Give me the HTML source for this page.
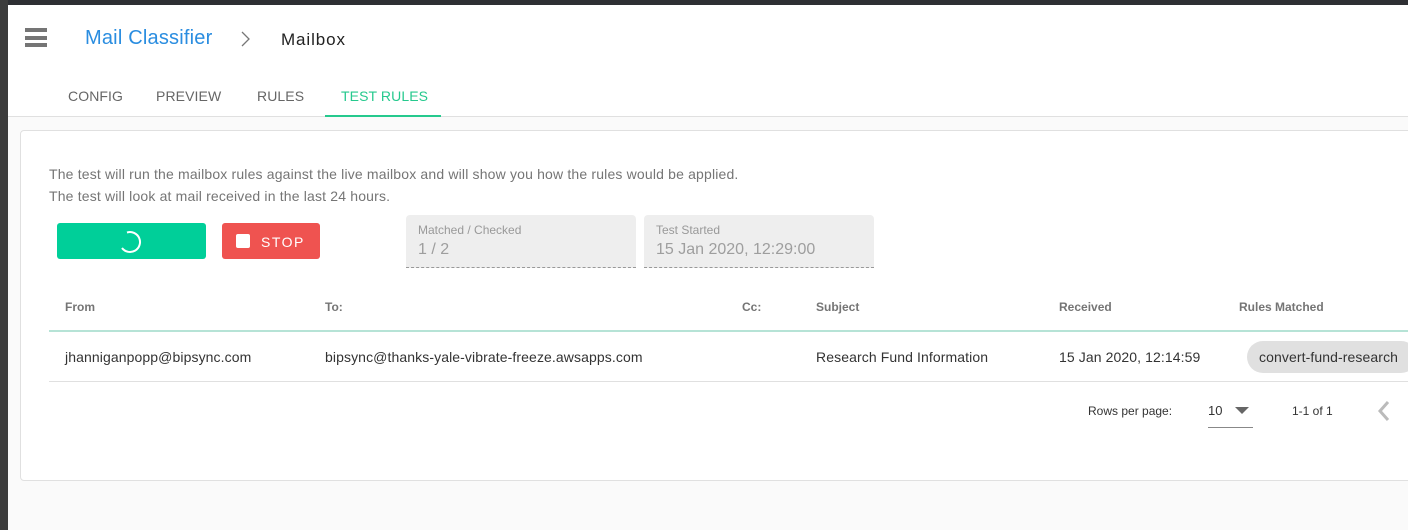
<!DOCTYPE html>
<html><head><style>
*{margin:0;padding:0;box-sizing:border-box}
body{width:1408px;height:530px;overflow:hidden;background:#fafafa;font-family:"Liberation Sans",Arial,sans-serif;position:relative}
.abs{position:absolute}
.top{left:0;top:0;width:1408px;height:5px;background:#2e2f33}
.left{left:0;top:0;width:8px;height:530px;background:#3c3c3c}
.hdr{left:8px;top:5px;width:1400px;height:112px;background:#fff;border-bottom:1px solid #e0e0e0}
.ham div{position:absolute;left:0;width:22px;height:4px;background:#757575}
.tab{top:88px;font-size:14px;color:#666;letter-spacing:0.1px}
.card{left:20px;top:130px;width:1400px;height:351px;background:#fff;border:1px solid #e0e0e0;border-radius:4px}
.txt{font-size:14px;color:#757575;letter-spacing:0.17px}
.th{top:300px;font-size:12px;font-weight:bold;color:#757575}
.td{top:349px;font-size:14px;color:#333;letter-spacing:0.1px}
.box{background:#eeeeee;border-bottom:1px dashed #999;border-radius:4px 4px 0 0}
.lbl{font-size:12px;color:#999;position:absolute;left:12px;top:8px}
.val{font-size:16px;color:#9e9e9e;position:absolute;left:12px;top:26px}
</style></head><body>
<div class="abs hdr"></div>
<div class="abs top"></div>
<div class="abs left"></div>
<div class="abs ham" style="left:25px;top:28px"><div style="top:0"></div><div style="top:8px"></div><div style="top:15px"></div></div>
<div class="abs" style="left:85px;top:27px;font-size:20px;color:#2a8de0;letter-spacing:0.2px">Mail Classifier</div>
<svg class="abs" style="left:240px;top:30px" width="12" height="18"><path d="M2 2 L9 9 L2 16" fill="none" stroke="#777" stroke-width="1.3"/></svg>
<div class="abs" style="left:281px;top:30px;font-size:17px;color:#222;letter-spacing:0.9px">Mailbox</div>
<div class="abs tab" style="left:68px">CONFIG</div>
<div class="abs tab" style="left:156px">PREVIEW</div>
<div class="abs tab" style="left:257px">RULES</div>
<div class="abs tab" style="left:341px;color:#26c98e">TEST RULES</div>
<div class="abs" style="left:325px;top:115px;width:116px;height:2px;background:#26c98e"></div>
<div class="abs card"></div>
<div class="abs txt" style="left:49px;top:166px">The test will run the mailbox rules against the live mailbox and will show you how the rules would be applied.</div>
<div class="abs txt" style="left:49px;top:188px">The test will look at mail received in the last 24 hours.</div>
<div class="abs" style="left:57px;top:223px;width:149px;height:36px;background:#00cf99;border-radius:3px">
<svg width="149" height="36"><path d="M70 9.5 A10 10 0 1 1 65 25" fill="none" stroke="#fff" stroke-width="2"/></svg></div>
<div class="abs" style="left:222px;top:223px;width:98px;height:36px;background:#ef5350;border-radius:3px">
<div class="abs" style="left:14px;top:11px;width:14px;height:14px;background:#fff;border-radius:2px"></div>
<div class="abs" style="left:39px;top:11px;font-size:14px;color:#fff;letter-spacing:1.5px">STOP</div></div>
<div class="abs box" style="left:406px;top:215px;width:230px;height:53px"><span class="lbl">Matched / Checked</span><span class="val">1 / 2</span></div>
<div class="abs box" style="left:644px;top:215px;width:230px;height:53px"><span class="lbl">Test Started</span><span class="val">15 Jan 2020, 12:29:00</span></div>
<div class="abs th" style="left:65px">From</div>
<div class="abs th" style="left:325px">To:</div>
<div class="abs th" style="left:742px">Cc:</div>
<div class="abs th" style="left:816px">Subject</div>
<div class="abs th" style="left:1059px">Received</div>
<div class="abs th" style="left:1239px">Rules Matched</div>
<div class="abs" style="left:49px;top:330px;width:1359px;height:2px;background:#b6e3d6"></div>
<div class="abs td" style="left:65px">jhanniganpopp@bipsync.com</div>
<div class="abs td" style="left:325px">bipsync@thanks-yale-vibrate-freeze.awsapps.com</div>
<div class="abs td" style="left:816px">Research Fund Information</div>
<div class="abs td" style="left:1059px">15 Jan 2020, 12:14:59</div>
<div class="abs" style="left:1247px;top:341px;width:170px;height:32px;background:#e0e0e0;border-radius:16px"></div>
<div class="abs td" style="left:1259px">convert-fund-research</div>
<div class="abs" style="left:49px;top:381px;width:1359px;height:1px;background:#e0e0e0"></div>
<div class="abs" style="left:1088px;top:404px;font-size:12px;color:#333">Rows per page:</div>
<div class="abs" style="left:1208px;top:403px;font-size:13px;color:#333">10</div>
<svg class="abs" style="left:1234px;top:406px" width="16" height="10"><path d="M1 1 L15 1 L8 8 Z" fill="#666"/></svg>
<div class="abs" style="left:1208px;top:427px;width:45px;height:1px;background:#888"></div>
<div class="abs" style="left:1292px;top:404px;font-size:12px;color:#333">1-1 of 1</div>
<svg class="abs" style="left:1376px;top:400px" width="16" height="22"><path d="M12 2 L4 11 L12 20" fill="none" stroke="#bbb" stroke-width="3"/></svg>
</body></html>
